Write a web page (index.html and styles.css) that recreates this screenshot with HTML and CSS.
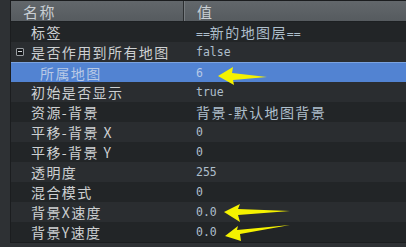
FILE: index.html
```html
<!DOCTYPE html>
<html lang="zh">
<head>
    <meta charset="UTF-8">
    <title>属性</title>
    <link rel="stylesheet" href="styles.css">
</head>
<body>
    <div class="panel">
        <div class="grid">
            <div class="row head">
                <div class="name">名称</div>
                <div class="value">值</div>
            </div>
            <div class="row dark">
                <div class="name">标签</div>
                <div class="value">==<span class="zh">新的地图层</span>==</div>
            </div>
            <div class="row light">
                <div class="name"><span class="toggle"></span>是否作用到所有地图</div>
                <div class="value">false</div>
            </div>
            <div class="row selected">
                <div class="name child">所属地图</div>
                <div class="value">6</div>
            </div>
            <div class="row light">
                <div class="name">初始是否显示</div>
                <div class="value">true</div>
            </div>
            <div class="row dark">
                <div class="name">资源-背景</div>
                <div class="value"><span class="zh">背景</span>-<span class="zh">默认地图背景</span></div>
            </div>
            <div class="row light">
                <div class="name">平移-背景 X</div>
                <div class="value">0</div>
            </div>
            <div class="row dark">
                <div class="name">平移-背景 Y</div>
                <div class="value">0</div>
            </div>
            <div class="row light">
                <div class="name">透明度</div>
                <div class="value">255</div>
            </div>
            <div class="row dark">
                <div class="name">混合模式</div>
                <div class="value">0</div>
            </div>
            <div class="row light">
                <div class="name">背景X速度</div>
                <div class="value">0.0</div>
            </div>
            <div class="row dark">
                <div class="name">背景Y速度</div>
                <div class="value">0.0</div>
            </div>
        </div>

        <!-- Markierungen über der Tabelle -->
        <svg class="marks" width="406" height="247" viewBox="0 0 406 247">
            <polygon points="218,76 233,67 232,73 267,77 233,80 234,85" fill="#f5f200"/>
            <polygon points="224,212 240,204 238,209 290,211 238,215 240,222" fill="#f5f200"/>
            <polygon points="225,236 238,226 237,230 290,225 240,234 241,241" fill="#f5f200"/>
        </svg>
    </div>
</body>
</html>
```

FILE: styles.css
```css
* {
    box-sizing: border-box;
    margin: 0;
    padding: 0;
}

body {
    background-color: #2e3134;
    font-family: 'DejaVu Sans Mono', 'Noto Sans CJK SC', monospace;
    width: 406px;
    height: 247px;
    overflow: hidden;
}

.panel {
    position: relative;
    height: 247px;
    padding-left: 10px;
}

.grid {
    display: flex;
    flex-direction: column;
    border-top: 1px solid #1b1d1f;
    border-left: 1px solid #1b1d1f;
    border-bottom: 1px solid #1b1d1f;
    background-color: #232628;
}

.row {
    display: flex;
    height: 20px;
    align-items: center;
}

.name {
    width: 173px;
    padding-left: 20px;
    display: flex;
    align-items: center;
    font-family: 'Noto Sans CJK SC', sans-serif;
    font-size: 14px;
    letter-spacing: 1.4px;
    color: #cdd0d2;
    white-space: nowrap;
}

.value {
    flex: 1;
    padding-left: 12px;
    font-size: 11.5px;
    color: #aebfcc;
    white-space: nowrap;
}

.zh {
    font-family: 'Noto Sans CJK SC', sans-serif;
    font-size: 14px;
    letter-spacing: 1.4px;
}

.head {
    background: linear-gradient(#62676b, #565b5f);
    border-bottom: 1px solid #1d2022;
    height: 21px;
}

.head .name {
    padding-left: 12px;
    font-size: 15px;
    color: #c9cfd4;
    border-right: 1px solid #2c2f31;
    height: 100%;
}

.head .value {
    font-size: 15px;
    color: #c9cfd4;
    border-left: 1px solid #777c80;
    height: 100%;
    display: flex;
    align-items: center;
    font-family: 'Noto Sans CJK SC', sans-serif;
}

.dark {
    background-color: #222527;
}

.light {
    background-color: #2a2d30;
}

.selected {
    background-color: #5283d2;
    border-top: 1px solid #7ba3e0;
}

.selected .name,
.selected .value {
    color: #b8c9e6;
}

.child {
    padding-left: 29px;
}

.toggle {
    width: 8px;
    height: 8px;
    margin-left: -15px;
    margin-right: 7px;
    border: 1px solid #9a9ea2;
    border-radius: 1px;
    background-color: #16181a;
    position: relative;
}

.toggle::after {
    content: "";
    position: absolute;
    left: 1px;
    right: 1px;
    top: 2px;
    height: 1px;
    background-color: #d0d3d6;
}

.marks {
    position: absolute;
    left: 0;
    top: 0;
    pointer-events: none;
}
```
